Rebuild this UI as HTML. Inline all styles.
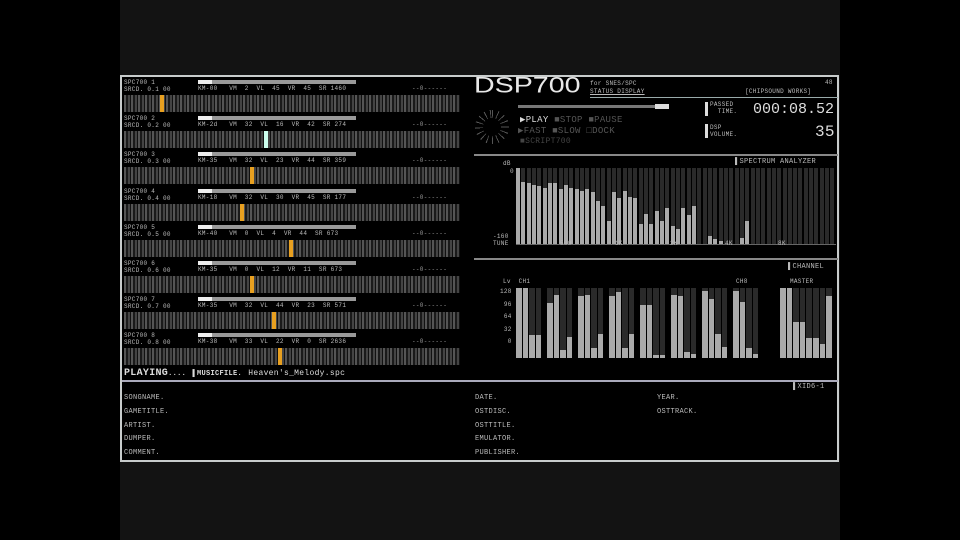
<!DOCTYPE html><html><head><meta charset="utf-8"><style>
*{margin:0;padding:0;box-sizing:border-box}
body{width:960px;height:540px;background:#000;overflow:hidden;position:relative;font-family:"Liberation Mono",monospace;color:#ccc}
.a{position:absolute}
.t{position:absolute;font-size:7px;color:#bbb;white-space:nowrap;letter-spacing:0.3px}
.kb{position:absolute;left:124px;width:336px;height:17px;background:repeating-linear-gradient(90deg,#555 0 2px,#1a1a1a 2px 4px,#444 4px 6px,#111 6px 7px)}
.ln{position:absolute;background:#9aa;height:1px}
</style></head><body>
<div class="a" style="left:120px;top:0;width:720px;height:540px;background:#131313"></div>
<div class="a" style="left:120px;top:75px;width:719px;height:387px;background:#000;border:2px solid #c8cccc"></div>
<div id="rows"></div>
<div class="t" style="left:124px;top:368px;font-size:10px;font-weight:bold;color:#ddd">PLAYING<span style="font-size:7px">....</span> <span style="font-size:7px">▌MUSICFILE.</span> <span style="font-size:8px;font-weight:normal">Heaven's_Melody.spc</span></div>
<div class="ln" style="left:122px;top:380px;width:716px;height:2px;background:#aab"></div>
<div class="t" style="left:124px;top:394px">SONGNAME.</div>
<div class="t" style="left:124px;top:408px">GAMETITLE.</div>
<div class="t" style="left:124px;top:422px">ARTIST.</div>
<div class="t" style="left:124px;top:435px">DUMPER.</div>
<div class="t" style="left:124px;top:449px">COMMENT.</div>
<div class="t" style="left:475px;top:394px">DATE.</div>
<div class="t" style="left:475px;top:408px">OSTDISC.</div>
<div class="t" style="left:475px;top:422px">OSTTITLE.</div>
<div class="t" style="left:475px;top:435px">EMULATOR.</div>
<div class="t" style="left:475px;top:449px">PUBLISHER.</div>
<div class="t" style="left:657px;top:394px">YEAR.</div>
<div class="t" style="left:657px;top:408px">OSTTRACK.</div>
<div class="t" style="left:793px;top:383px">▌XID6-1</div>
<div class="t" style="left:474px;top:72px;font-size:26px;font-family:'Liberation Sans',sans-serif;color:#e8e8e8;letter-spacing:0;transform:scale(1.1,0.85);transform-origin:top left">DSP700</div>
<div class="t" style="left:590px;top:80px;font-size:6px">for SNES/SPC</div>
<div class="t" style="left:590px;top:88px;font-size:6px;text-decoration:underline">STATUS DISPLAY</div>
<div class="t" style="left:745px;top:88px;font-size:6px">[CHIPSOUND WORKS]</div>
<div class="t" style="left:825px;top:79px;font-size:6px">48</div>
<div class="ln" style="left:590px;top:97px;width:248px"></div>
<div class="a" style="left:518px;top:105px;width:150px;height:3px;background:#777"></div>
<div class="a" style="left:655px;top:104px;width:14px;height:5px;background:#ddd"></div>
<div class="a" style="left:475px;top:110px;width:34px;height:34px;border-radius:50%;background:repeating-conic-gradient(#555 0 4deg,#000 4deg 22deg)"></div>
<div class="a" style="left:483px;top:118px;width:18px;height:18px;border-radius:50%;background:#000"></div>
<div class="t" style="left:520px;top:115px;font-size:9px;color:#ddd">▶PLAY <span style="color:#555">■STOP ■PAUSE</span></div>
<div class="t" style="left:518px;top:126px;font-size:9px;color:#555">▶FAST ■SLOW □DOCK</div>
<div class="t" style="left:520px;top:137px;font-size:8px;color:#444">■SCRIPT700</div>
<div class="a" style="left:705px;top:102px;width:3px;height:14px;background:#ddd"></div>
<div class="a" style="left:705px;top:124px;width:3px;height:14px;background:#ddd"></div>
<div class="t" style="left:710px;top:101px;font-size:6px">PASSED<br>&nbsp;&nbsp;TIME.</div>
<div class="t" style="left:710px;top:124px;font-size:6px">DSP<br>VOLUME.</div>
<div class="t" style="left:753px;top:101px;font-size:15px;color:#ddd;letter-spacing:0">000:08.52</div>
<div class="t" style="left:815px;top:123px;font-size:16px;color:#ddd">35</div>
<div class="ln" style="left:474px;top:154px;width:364px;height:2px;background:#888"></div>
<div class="t" style="left:735px;top:158px;font-size:7px">▌SPECTRUM ANALYZER</div>
<div class="t" style="left:503px;top:160px;font-size:6px">dB</div>
<div class="t" style="left:510px;top:168px;font-size:6px">0</div>
<div class="t" style="left:493px;top:233px;font-size:6px">-160</div>
<div class="t" style="left:493px;top:240px;font-size:6px">TUNE</div>
<div id="sp" class="a" style="left:516px;top:168px;width:320px;height:76px"></div>
<div class="ln" style="left:516px;top:244px;width:320px;background:#666"></div>
<div class="t" style="left:560px;top:240px;font-size:6px">500</div>
<div class="t" style="left:615px;top:240px;font-size:6px">1K</div>
<div class="t" style="left:670px;top:240px;font-size:6px">2K</div>
<div class="t" style="left:725px;top:240px;font-size:6px">4K</div>
<div class="t" style="left:778px;top:240px;font-size:6px">8K</div>
<div class="ln" style="left:474px;top:258px;width:364px;height:2px;background:#888"></div>
<div class="t" style="left:788px;top:263px;font-size:7px">▌CHANNEL</div>
<div class="t" style="left:503px;top:278px;font-size:6px">Lv &nbsp;CH1</div>
<div class="t" style="left:736px;top:278px;font-size:6px">CH8</div>
<div class="t" style="left:790px;top:278px;font-size:6px">MASTER</div>
<div class="t" style="left:500px;top:286px;font-size:6px;line-height:12.5px;text-align:right">128<br>96<br>64<br>32<br>0</div>
<div id="ch"></div>
<script>
var h='';
var vals=[['0.1','-00','2','45','45','1460',160],['0.2','-2d','32','16','42','274',264],['0.3','-35','32','23','44','359',250],['0.4','-18','32','30','45','177',240],['0.5','-40','0','4','44','673',289],['0.6','-35','0','12','11','673',250],['0.7','-35','32','44','23','571',272],['0.8','-38','33','22','0','2636',278]];
for(var i=0;i<8;i++){var y=80+i*36.2,v=vals[i];
h+='<div class="t" style="left:124px;top:'+(y-1)+'px;font-size:6px">SPC700 '+(i+1)+'<br>SRCD. '+v[0]+' 00</div>';
h+='<div class="a" style="left:198px;top:'+y+'px;width:158px;height:4px;background:#999"></div>';
h+='<div class="a" style="left:198px;top:'+y+'px;width:14px;height:4px;background:#eee"></div>';
h+='<div class="t" style="left:198px;top:'+(y+5)+'px;font-size:6px">KM'+v[1]+'&nbsp;&nbsp;&nbsp;VM&nbsp; '+v[2]+'&nbsp; VL&nbsp; '+v[3]+'&nbsp; VR&nbsp; '+v[4]+'&nbsp; SR '+v[5]+'</div>';
h+='<div class="t" style="left:412px;top:'+(y+5)+'px;font-size:6px;color:#999">--0------</div>';
h+='<div class="kb" style="top:'+(y+15)+'px"></div>';
h+='<div class="a" style="left:'+v[6]+'px;top:'+(y+15)+'px;width:4px;height:17px;background:'+(i==1?'#cfe':'#e8a020')+'"></div>';}
document.getElementById('rows').innerHTML=h;
var sp=[100,82,80,78,76,74,80,80,72,78,74,72,70,72,68,56,50,30,68,60,70,62,60,26,40,26,44,30,48,24,20,48,38,50,0,0,10,6,4,0,0,0,8,30,0,0,0,0,0,0,0,0,0,0,0,0,0,0,0,0];
var s='';for(var j=0;j<60;j++){s+='<div class="a" style="left:'+(j*5.33)+'px;top:0;width:4px;height:76px;background:#2a2a2a"></div>';s+='<div class="a" style="left:'+(j*5.33)+'px;bottom:0;width:4px;height:'+(sp[j]*0.76)+'px;background:#aaa"></div>';}
document.getElementById('sp').innerHTML=s;
var g=[[516,[100,100,33,33]],[547,[78,90,12,30]],[578,[88,90,14,34]],[609,[88,95,14,34]],[640,[76,76,4,4]],[671,[90,88,8,6]],[702,[96,84,34,16]],[733,[96,80,14,6]],[780,[100,100,52,52,28,28,20,88]]];
var c='';g.forEach(function(q){q[1].forEach(function(v,k){var x=q[0]+k*6.6;c+='<div class="a" style="left:'+x+'px;top:288px;width:5.5px;height:70px;background:#2a2a2a"></div><div class="a" style="left:'+x+'px;top:'+(358-v*0.7)+'px;width:5.5px;height:'+(v*0.7)+'px;background:#aaa"></div>';});});
document.getElementById('ch').innerHTML=c;
</script>
</body></html>
